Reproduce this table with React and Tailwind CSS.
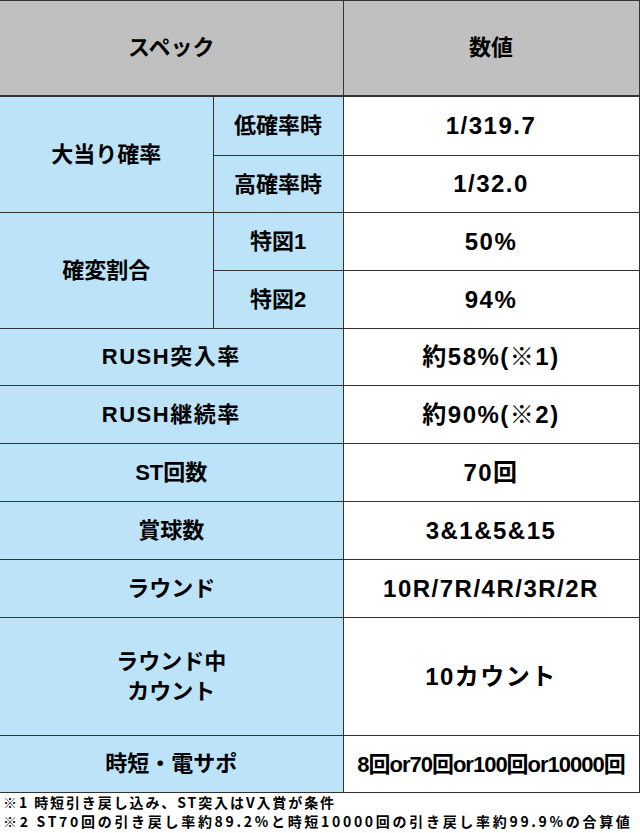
const font = { fontFamily: '"Liberation Sans", "Noto Sans CJK JP", sans-serif' };

const rows = [
  { label: '大当り確率', subs: [['低確率時', '1/319.7', 60], ['高確率時', '1/32.0', 57]] },
  { label: '確変割合', subs: [['特図1', '50%', 58], ['特図2', '94%', 58]] },
  { label: 'RUSH突入率', value: '約58%(※1)', h: 57, wide: true },
  { label: 'RUSH継続率', value: '約90%(※2)', h: 58, wide: true },
  { label: 'ST回数', value: '70回', h: 58 },
  { label: '賞球数', value: '3&1&5&15', h: 58 },
  { label: 'ラウンド', value: '10R/7R/4R/3R/2R', h: 58 },
  { label: 'ラウンド中\nカウント', value: '10カウント', h: 118 },
  { label: '時短・電サポ', value: '8回or70回or100回or10000回', h: 57, narrow: true },
];

const cell = 'border border-[#333] text-center align-middle font-bold text-black';

export default function App() {
  return (
    <div className="w-[640px] h-[833px] bg-white overflow-hidden" style={font}>
      <table className="w-[639px] table-fixed border-collapse">
        <colgroup>
          <col className="w-[213px]" />
          <col className="w-[130px]" />
          <col className="w-[296px]" />
        </colgroup>
        <thead>
          <tr>
            <th colSpan={2} className={`${cell} h-[95px] bg-[#c0c0c0] border-l-0 border-b-2 text-[22px]`}>スペック</th>
            <th className={`${cell} bg-[#c0c0c0] border-b-2 text-[22px]`}>数値</th>
          </tr>
        </thead>
        <tbody>
          {rows.map((r) =>
            r.subs ? (
              r.subs.map(([sub, val, h], i) => (
                <tr key={r.label + sub}>
                  {i === 0 && (
                    <td rowSpan={2} className={`${cell} bg-[#bce3f7] border-l-0 text-[22px]`}>{r.label}</td>
                  )}
                  <td className={`${cell} bg-[#bce3f7] text-[22px]`} style={{ height: h }}>{sub}</td>
                  <td className={`${cell} bg-white text-[24px] tracking-[1.5px]`}>{val}</td>
                </tr>
              ))
            ) : (
              <tr key={r.label}>
                <td
                  colSpan={2}
                  className={`${cell} bg-[#bce3f7] border-l-0 text-[22px] leading-[30px] whitespace-pre-line ${r.wide ? 'tracking-[1.5px]' : ''}`}
                  style={{ height: r.h }}
                >
                  {r.label}
                </td>
                <td className={`${cell} bg-white ${r.narrow ? 'text-[22px] tracking-[-1px]' : 'text-[24px] tracking-[1.5px]'}`}>
                  {r.value}
                </td>
              </tr>
            )
          )}
        </tbody>
      </table>
      <div className="pl-[3px] text-[14px] leading-[19px] font-bold text-black" style={{ fontFamily: '"Noto Sans CJK JP", sans-serif' }}>
        <p className="tracking-[1.9px]">※1 時短引き戻し込み、ST突入はV入賞が条件</p>
        <p className="tracking-[2.7px] whitespace-nowrap">※2 ST70回の引き戻し率約89.2%と時短10000回の引き戻し率約99.9%の合算値</p>
      </div>
    </div>
  );
}
